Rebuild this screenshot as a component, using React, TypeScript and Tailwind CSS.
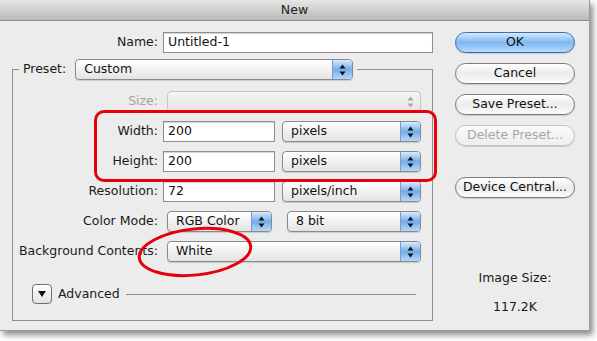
import React from "react";

const font = { fontFamily: '"DejaVu Sans", "Liberation Sans", sans-serif' };

function Arrows({ color }: { color: string }) {
  return (
    <svg width="7" height="12" viewBox="0 0 7 12">
      <path d="M3.5 0.5 L6.5 4.5 H0.5 Z" fill={color} />
      <path d="M0.5 7.5 H6.5 L3.5 11.5 Z" fill={color} />
    </svg>
  );
}

function Select({ value, className, disabled }: { value?: string; className: string; disabled?: boolean }) {
  if (disabled) {
    return (
      <div className={`flex h-[21px] overflow-hidden rounded-[4px] border border-[#c4c4c4] bg-gradient-to-b from-[#f4f4f4] to-[#e6e6e6] ${className}`}>
        <div className="flex-1" />
        <div className="flex w-[20px] items-center justify-center">
          <Arrows color="#a8a8a8" />
        </div>
      </div>
    );
  }
  return (
    <div className={`flex h-[21px] overflow-hidden rounded-[4px] border border-[#8a8a8a] bg-gradient-to-b from-white via-[#f1f1f1] to-[#e4e4e4] shadow-[0_1px_1px_rgba(0,0,0,0.15)] ${className}`}>
      <div className="flex flex-1 items-center pl-[8px] text-[#111]">{value}</div>
      <div className="flex w-[20px] items-center justify-center border-l border-[#7a9cc8] bg-gradient-to-b from-[#d9ebfd] via-[#74ade9] to-[#b6d8fb]">
        <Arrows color="#111" />
      </div>
    </div>
  );
}

function Input({ value, className }: { value: string; className: string }) {
  return (
    <div className={`flex h-[21px] items-center border border-[#8e8e8e] bg-white pl-[4px] text-[#111] shadow-[inset_0_1px_1px_rgba(0,0,0,0.18)] ${className}`}>
      {value}
    </div>
  );
}

function AquaButton({ label, primary, disabled }: { label: string; primary?: boolean; disabled?: boolean }) {
  let cls = "border-[#7a7a7a] bg-gradient-to-b from-white via-[#ececec] to-[#fbfbfb] text-[#111]";
  if (primary) cls = "border-[#3d6cae] bg-gradient-to-b from-[#d4e9fd] via-[#7fb8f0] to-[#b4dafc] text-[#111]";
  if (disabled) cls = "border-[#c2c2c2] bg-gradient-to-b from-[#fafafa] to-[#eeeeee] text-[#a6a6a6]";
  return (
    <div className={`flex h-[21px] w-[120px] items-center justify-center rounded-full border shadow-[0_1px_1px_rgba(0,0,0,0.15)] ${cls}`}>
      {label}
    </div>
  );
}

function Row({ label, children, dim }: { label: string; children: React.ReactNode; dim?: boolean }) {
  return (
    <div className="flex h-[21px] items-center">
      <div className={`w-[145px] text-right ${dim ? "text-[#a3a3a3]" : "text-[#1a1a1a]"}`}>{label}</div>
      <div className="ml-[5px] flex items-center">{children}</div>
    </div>
  );
}

export default function App() {
  return (
    <div className="h-[341px] w-[597px] overflow-hidden bg-white text-[12.5px]" style={font}>
      <div className="flex h-[331px] w-[590px] flex-col border-r border-b border-[#9a9a9a] bg-[#ececec] shadow-[3px_4px_6px_rgba(0,0,0,0.45)]">
        {/* title bar */}
        <div className="flex h-[21px] items-center justify-center border-b border-[#8c8c8c] bg-gradient-to-b from-[#e6e6e6] to-[#b9b9b9] text-[#222]">
          New
        </div>

        <div className="relative flex flex-1">
          {/* left column */}
          <div className="w-[440px] pl-[12px] pt-[11px]">
            <div className="flex h-[21px] items-center">
              <div className="w-[146px] text-right text-[#1a1a1a]">Name:</div>
              <Input value="Untitled-1" className="ml-[5px] w-[270px]" />
            </div>

            <fieldset className="mt-[6px] h-[262px] w-[421px] border border-[#8e8e8e] pb-[18px]">
              <legend className="ml-[6px] flex items-center pl-[4px] pr-[4px]">
                <span className="text-[#1a1a1a]">Preset:</span>
                <Select value="Custom" className="ml-[9px] w-[278px]" />
              </legend>

              <div className="flex flex-col gap-[9px] pt-[11px]">
                <Row label="Size:" dim>
                  <Select disabled className="ml-[4px] w-[254px]" />
                </Row>
                <Row label="Width:">
                  <Input value="200" className="w-[112px]" />
                  <Select value="pixels" className="ml-[7px] w-[139px]" />
                </Row>
                <Row label="Height:">
                  <Input value="200" className="w-[112px]" />
                  <Select value="pixels" className="ml-[7px] w-[139px]" />
                </Row>
                <Row label="Resolution:">
                  <Input value="72" className="w-[112px]" />
                  <Select value="pixels/inch" className="ml-[7px] w-[139px]" />
                </Row>
                <Row label="Color Mode:">
                  <Select value="RGB Color" className="ml-[4px] w-[105px]" />
                  <Select value="8 bit" className="ml-[15px] w-[134px]" />
                </Row>
                <Row label="Background Contents:">
                  <Select value="White" className="ml-[4px] w-[254px]" />
                </Row>
              </div>

              <div className="mt-[22px] flex items-center pl-[19px]">
                <div className="flex h-[20px] w-[20px] items-center justify-center rounded-[4px] border border-[#6f6f6f] bg-gradient-to-b from-white to-[#e2e2e2]">
                  <svg width="8" height="6" viewBox="0 0 8 6">
                    <path d="M0 0 H8 L4 6 Z" fill="#111" />
                  </svg>
                </div>
                <span className="ml-[6px] text-[#1a1a1a]">Advanced</span>
                <div className="ml-[6px] h-px w-[290px] bg-[#8e8e8e]" />
              </div>
            </fieldset>
          </div>

          {/* right column */}
          <div className="flex flex-col items-center pl-[15px] pt-[11px]">
            <div className="flex flex-col gap-[10px]">
              <AquaButton label="OK" primary />
              <AquaButton label="Cancel" />
              <AquaButton label="Save Preset..." />
              <AquaButton label="Delete Preset..." disabled />
              <div className="mt-[21px]">
                <AquaButton label="Device Central..." />
              </div>
            </div>
            <div className="mt-[71px] w-[120px] text-center text-[#1a1a1a]">Image Size:</div>
            <div className="mt-[10px] w-[120px] text-center text-[#1a1a1a]">117.2K</div>
          </div>

          {/* red annotations */}
          <div className="pointer-events-none absolute left-[94px] top-[89px] h-[72px] w-[343px] rounded-[10px] border-[3px] border-[#e5000c]" />
          <svg className="pointer-events-none absolute left-[133px] top-[203px]" width="124" height="56" viewBox="0 0 124 56">
            <ellipse cx="62" cy="28" rx="56" ry="23" fill="none" stroke="#e5000c" strokeWidth="3" transform="rotate(-6 62 28)" />
          </svg>
        </div>
      </div>
    </div>
  );
}
